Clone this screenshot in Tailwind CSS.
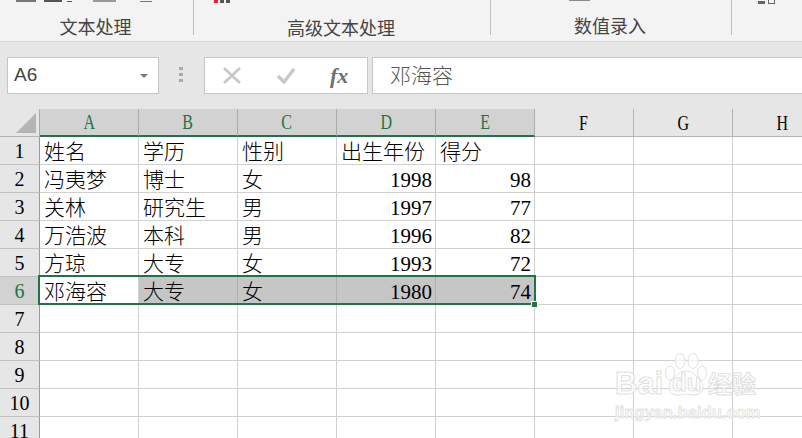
<!DOCTYPE html>
<html lang="zh-CN">
<head>
  <meta charset="UTF-8" />
  <title>Excel</title>
  <script src="https://cdn.jsdelivr.net/npm/@tailwindcss/browser@4"></script>
</head>
<body class="w-[802px] h-[438px] overflow-hidden bg-white relative font-['Liberation_Serif','Noto_Sans_CJK_SC',serif]">

  <!-- ribbon, the tool icons are cut off by the top edge -->
  <div class="h-[42px] bg-[#f3f3f3] border-b border-[#d4d4d4] flex overflow-hidden font-['Noto_Sans_CJK_SC',sans-serif] text-[18px] text-[#444]">
    <div class="w-[194px] h-[35px] border-r border-[#bdbdbd] flex flex-col">
      <div class="h-[3px] flex items-end pl-[16px]">
        <div class="w-[20px] h-[2px] bg-[#777]"></div>
        <div class="ml-[8px] w-[18px] h-[2px] bg-[#555]"></div>
        <div class="ml-[5px] w-[5px] h-[1px] bg-[#555]"></div>
        <div class="ml-[21px] w-[23px] h-[2px] bg-[#999]"></div>
        <div class="ml-[24px] w-[12px] h-[1px] bg-[#777]"></div>
      </div>
      <div class="text-center pr-[2px] mt-[13px] leading-[22px]">文本处理</div>
    </div>
    <div class="w-[297px] h-[35px] border-r border-[#bdbdbd] flex flex-col">
      <div class="h-[3px] flex items-start pl-[20px]">
        <div class="w-[4px] h-[3px] bg-[#e8202a]"></div>
        <div class="ml-[2px] w-[4px] h-[3px] bg-[#555]"></div>
        <div class="ml-[2px] w-[4px] h-[3px] bg-[#555]"></div>
      </div>
      <div class="text-center pr-[2px] mt-[13px] leading-[22px]">高级文本处理</div>
    </div>
    <div class="w-[241px] h-[35px] border-r border-[#bdbdbd] flex flex-col">
      <div class="h-[3px] flex items-start pl-[78px]">
        <div class="w-[21px] h-[1px] bg-[#888]"></div>
      </div>
      <div class="text-center pr-[2px] mt-[13px] leading-[22px]">数值录入</div>
    </div>
    <div class="h-[35px] pl-[26px]">
      <div class="h-[4px] flex items-end">
        <div class="w-[7px] h-[3px] bg-[#666]"></div>
        <div class="ml-[3px] w-[7px] h-[4px] border-x border-b border-[#666]"></div>
      </div>
    </div>
  </div>

  <!-- formula bar -->
  <div class="h-[67px] bg-[#e6e6e6] flex items-start pt-[15px] pl-[7px]">
    <div class="w-[152px] h-[37px] bg-white border border-[#c6c6c6] flex items-center justify-between pl-[6px] pr-[10px] font-['Liberation_Sans',sans-serif] text-[19px] text-[#444]">
      A6
      <div class="w-0 h-0 border-x-[4px] border-x-transparent border-t-[4px] border-t-[#777]"></div>
    </div>
    <div class="w-[45px] pr-[2px] flex flex-col items-center gap-[3px] pt-[10px]">
      <div class="w-[4px] h-[3px] bg-[#aaa]"></div>
      <div class="w-[4px] h-[3px] bg-[#aaa]"></div>
      <div class="w-[4px] h-[3px] bg-[#aaa]"></div>
    </div>
    <div class="w-[164px] h-[37px] bg-white border border-[#c6c6c6] flex items-center">
      <svg class="ml-[18px]" width="18" height="18" viewBox="0 0 18 18"><path d="M1 1 17 16M17 1 1 16" stroke="#c8c8c8" stroke-width="2.6" fill="none"/></svg>
      <svg class="ml-[35px]" width="20" height="18" viewBox="0 0 20 18"><path d="M2 9 8 15 18 2" stroke="#c8c8c8" stroke-width="3.4" fill="none"/></svg>
      <span class="ml-[34px] text-[22px] leading-none italic font-bold text-[#707070]">fx</span>
    </div>
    <div class="ml-[4px] flex-1 h-[37px] bg-white border-y border-l border-[#c6c6c6] flex items-center pl-[17px] pb-[2px] font-['Noto_Sans_CJK_SC',sans-serif] font-light text-[21px] text-[#555]">邓海容</div>
  </div>

  <!-- sheet -->
  <div id="sheet" class="grid grid-cols-[40px_repeat(8,99px)] grid-rows-[28px_repeat(11,28px)] text-[21px] text-black leading-none">
    <div class="bg-[#e6e6e6] border-r border-b border-r-[#aaa] border-b-[#b4b4b4] relative">
      <div class="absolute right-[3px] bottom-[3px] w-0 h-0 border-l-[20px] border-l-transparent border-b-[20px] border-b-[#b4b4b4]"></div>
    </div>
  </div>

  <!-- selection over row 6 -->
  <div class="absolute left-[38px] top-[275px] w-[498px] h-[30px] border-2 border-[#217346]"></div>
  <div class="absolute left-[531px] top-[301px] w-[7px] h-[7px] bg-[#217346] border border-white"></div>

  <!-- watermark -->
  <div class="absolute left-[615px] top-[353px] w-[187px] h-[85px] font-['Liberation_Sans',sans-serif] text-white/70">
    <svg class="absolute left-0 top-0" width="100" height="46" viewBox="0 0 100 46" fill="#fff" fill-opacity="0.7" stroke="#e0e0e0" stroke-width="1"><ellipse cx="65" cy="8" rx="5" ry="7.5"/><ellipse cx="78" cy="8" rx="5" ry="7.5"/><ellipse cx="55" cy="20" rx="4.5" ry="7"/><ellipse cx="87" cy="20" rx="4.5" ry="7"/><path d="M71 18c-8 0-10 6-15 10-4 5-2 14 6 14 4 0 7-1 9-1s5 1 9 1c8 0 10-9 6-14-5-4-7-10-15-10z"/></svg>
    <span class="absolute left-0 top-[11px] text-[31px] font-bold leading-[40px] [-webkit-text-stroke:1px_#e0e0e0]">Bai</span>
    <span class="absolute left-[57px] top-[15px] text-[24px] font-bold leading-[30px] [-webkit-text-stroke:1px_#e0e0e0]">du</span>
    <span class="absolute left-[93px] top-[14px] text-[24px] font-bold leading-[32px] font-['Noto_Sans_CJK_SC',sans-serif] [-webkit-text-stroke:1px_#e0e0e0]">经验</span>
    <span class="absolute left-0 top-[50px] text-[16px] font-bold leading-[20px] tracking-[0.3px] [-webkit-text-stroke:1px_#e4e4e4]">jingyan.baidu.com</span>
  </div>

  <script>
    const rows = [
      ['姓名', '学历', '性别', '出生年份', '得分'],
      ['冯夷梦', '博士', '女', 1998, 98],
      ['关林', '研究生', '男', 1997, 77],
      ['万浩波', '本科', '男', 1996, 82],
      ['方琼', '大专', '女', 1993, 72],
      ['邓海容', '大专', '女', 1980, 74]
    ];

    function colHeader(name, i) {
      const cls = i < 5
        ? 'bg-[#d2d2d2] border-r border-r-[#ababab] border-b-2 border-b-[#217346] text-[#217346]'
        : 'bg-[#e6e6e6] border-r border-r-[#b4b4b4] border-b border-b-[#b4b4b4]';
      return `<div class="${cls} flex items-center justify-center text-[20px]"><span class="scale-x-[0.8]">${name}</span></div>`;
    }

    function rowHeader(n) {
      const active = n === 6 ? 'bg-[#d2d2d2] text-[#217346]' : 'bg-[#e6e6e6]';
      return `<div class="${active} border-r border-b border-r-[#999] border-b-[#c0c0c0] flex items-center justify-center text-[20px] pt-[1px]">${n}</div>`;
    }

    function cell(value, n, i) {
      const shaded = n === 6 && i > 0 && i < 5 ? 'bg-[#c6c6c6] border-[#b0b0b0]' : 'border-[#d0d0d0]';
      if (value === undefined) return `<div class="border-r border-b ${shaded}"></div>`;
      const align = typeof value === 'number'
        ? 'justify-end pr-[3px]'
        : 'pl-[4px] font-light';
      return `<div class="border-r border-b ${shaded} flex items-center pt-[3px] ${align}">${value}</div>`;
    }

    let html = ['A', 'B', 'C', 'D', 'E', 'F', 'G', 'H'].map(colHeader).join('');
    for (let n = 1; n <= 11; n++) {
      const data = rows[n - 1] || [];
      html += rowHeader(n);
      for (let i = 0; i < 8; i++) html += cell(data[i], n, i);
    }
    document.getElementById('sheet').insertAdjacentHTML('beforeend', html);
  </script>
</body>
</html>
